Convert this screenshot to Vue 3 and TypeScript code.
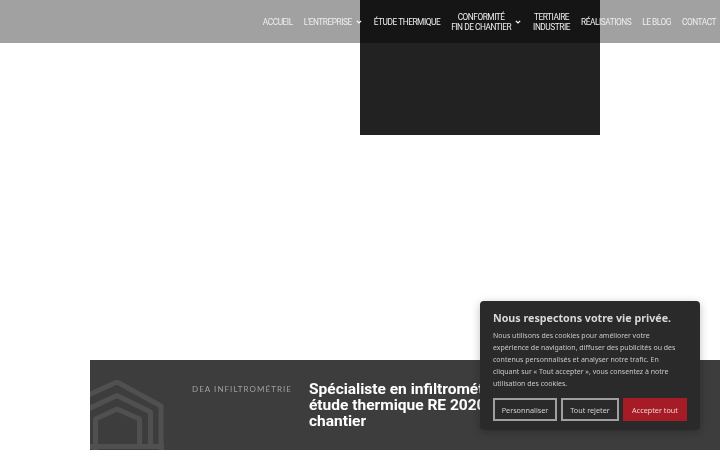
<template>
  <div class="page">
    <header class="site-header">
      <nav class="nav">
        <a v-for="item in navItems" :key="item.label" class="nav-item">
          <span class="nav-label">{{ item.label }}</span>
          <svg v-if="item.caret" class="caret" width="6" height="4" viewBox="0 0 6 4">
            <path d="M.8.8 3 3 5.2.8" fill="none" stroke="#fff" stroke-width="1.1" />
          </svg>
        </a>
      </nav>
    </header>

    <main>
      <section class="hero">
        <div class="video"></div>
      </section>
      <section class="intro">
        <svg class="house" width="74" height="70" viewBox="0 0 74 70">
          <g fill="none" stroke="#4f504f" stroke-width="5" stroke-linejoin="round">
            <path d="M-4 16 27 2 71 26V70" />
            <path d="M-4 30 27 15.500 60.500 32V66" />
            <path d="M5.500 70V39L27 29 49.500 39V66" />
            <path d="M0 66.500H74" />
          </g>
        </svg>
        <p class="tag">DEA INFILTROMÉTRIE</p>
        <h1 class="title">Spécialiste en infiltrométrie,<br />étude thermique RE 2020 et fin de<br />chantier</h1>
      </section>
    </main>

    <aside class="cookie">
      <h2 class="cookie-title">Nous respectons votre vie privée.</h2>
      <p class="cookie-text">
        Nous utilisons des cookies pour améliorer votre<br />
        expérience de navigation, diffuser des publicités ou des<br />
        contenus personnalisés et analyser notre trafic. En<br />
        cliquant sur « Tout accepter », vous consentez à notre<br />
        utilisation des cookies.
      </p>
      <div class="cookie-actions">
        <button class="btn btn-custom">Personnaliser</button>
        <button class="btn btn-reject">Tout rejeter</button>
        <button class="btn btn-accept">Accepter tout</button>
      </div>
    </aside>
  </div>
</template>

<script setup lang="ts">
interface NavItem {
  label: string
  caret?: boolean
}

const navItems: NavItem[] = [
  { label: 'ACCUEIL' },
  { label: "L'ENTREPRISE", caret: true },
  { label: 'ÉTUDE THERMIQUE' },
  { label: 'CONFORMITÉ\nFIN DE CHANTIER', caret: true },
  { label: 'TERTIAIRE\nINDUSTRIE' },
  { label: 'RÉALISATIONS' },
  { label: 'LE BLOG' },
  { label: 'CONTACT' }
]
</script>

<style>
html,
body {
  margin: 0;
  overflow: hidden;
  background: #fff;
}
</style>

<style scoped>
.page {
  position: relative;
  width: 720px;
  height: 450px;
  overflow: hidden;
  font-family: Roboto, 'Liberation Sans', sans-serif;
}

.site-header {
  position: absolute;
  top: 0;
  left: 0;
  right: 0;
  height: 43px;
  display: flex;
  justify-content: flex-end;
  align-items: center;
  padding-right: 4px;
  background: rgba(0, 0, 0, 0.37);
  will-change: transform;
}

.nav {
  display: flex;
  align-items: center;
  gap: 11px;
}

.nav-item {
  display: flex;
  align-items: center;
  gap: 4px;
  color: #eee;
  font-size: 8.300px;
  letter-spacing: -0.45px;
  line-height: 10px;
}

.nav-label {
  white-space: pre-line;
  text-align: center;
}

.caret {
  margin-right: 1px;
}

.hero {
  height: 360px;
  padding-left: 360px;
}

.video {
  width: 240px;
  height: 135px;
  background: #222;
}

.intro {
  height: 90px;
  margin-left: 90px;
  display: flex;
  align-items: flex-start;
  background: #3c3d3c;
  box-shadow: -90px 0 0 -89px #eee;
}

.house {
  flex: none;
  margin-top: 20px;
}

.tag {
  flex: none;
  width: 100px;
  margin: 24px 0 0 28px;
  font-family: Lato, sans-serif;
  font-size: 8px;
  line-height: 11px;
  letter-spacing: 1.050px;
  white-space: nowrap;
  color: #a0a0a0;
  will-change: transform;
}

.title {
  margin: 21px 0 0 17px;
  font-size: 15.500px;
  line-height: 16px;
  font-weight: 700;
  white-space: nowrap;
  color: #fff;
  will-change: transform;
}

.cookie {
  position: absolute;
  left: 480px;
  top: 301px;
  width: 220px;
  height: 129px;
  box-sizing: border-box;
  padding: 10px 13px;
  border-radius: 4px;
  background: #2a2a2a;
  font-family: 'Noto Sans', sans-serif;
  box-shadow: 0 2px 8px rgba(0, 0, 0, 0.25);
  will-change: transform;
}

.cookie-title {
  margin: 0 0 5px;
  font-size: 10.700px;
  line-height: 14px;
  font-weight: 700;
  color: #d8d8d8;
}

.cookie-text {
  margin: 0;
  font-size: 7px;
  line-height: 12px;
  white-space: nowrap;
  color: #c8c8c8;
}

.cookie-actions {
  display: flex;
  gap: 4px;
  margin-top: 8px;
}

.btn {
  height: 23px;
  padding: 0;
  box-sizing: border-box;
  border: 2px solid #a0a0a0;
  background: transparent;
  font-family: inherit;
  font-size: 7.250px;
  color: #d0d0d0;
}

.btn-custom {
  width: 64px;
}

.btn-reject {
  width: 58px;
}

.btn-accept {
  width: 64px;
  border-color: #a51c26;
  background: #a51c26;
  color: #ecd0d0;
}
</style>
